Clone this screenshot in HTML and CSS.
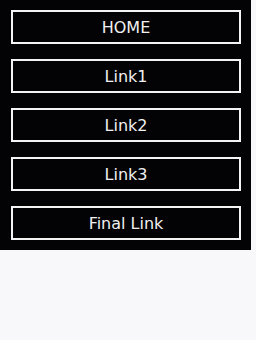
FILE: index.html
```html
<html>
<head>
  <link rel="stylesheet" href="styles.css">
</head>
<body>
  <!-- Side navigation -->
  <nav class="side-nav">
    <a class="nav-link" href="#">HOME</a>
    <a class="nav-link" href="#">Link1</a>
    <a class="nav-link" href="#">Link2</a>
    <a class="nav-link" href="#">Link3</a>
    <a class="nav-link" href="#">Final Link</a>
  </nav>
</body>
</html>
```

FILE: styles.css
```css
/* General styling */
body {
  margin: 0;
  background-color: #f8f8fb;
  font-family: 'DejaVu Sans', sans-serif;
}

/* Navigation panel */
.side-nav {
  width: 251px;
  height: 250px;
  box-sizing: border-box;
  padding: 10px 10px 0 11px;
  background-color: #030205;
  display: flex;
  flex-direction: column;
  gap: 15px;
}

.nav-link {
  display: flex;
  justify-content: center;
  align-items: center;
  width: 230px;
  height: 34px;
  box-sizing: border-box;
  border: 2px solid #f4f4f4;
  color: #f0f0f0;
  font-size: 16px;
  text-decoration: none;
}
```
